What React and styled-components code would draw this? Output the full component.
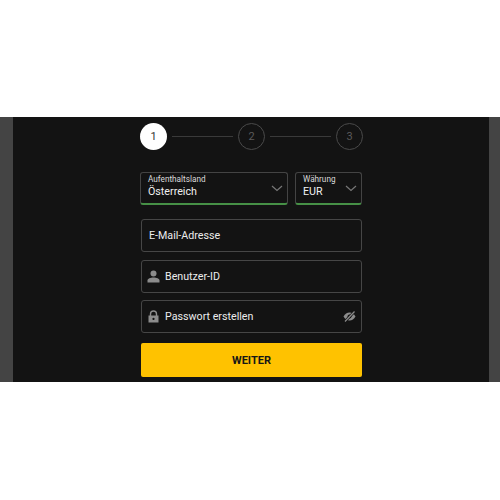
import React from "react";
import styled, { createGlobalStyle } from "styled-components";

const Global = createGlobalStyle`
  html, body { margin: 0; padding: 0; background: #fff; }
  body { font-family: Roboto, "Liberation Sans", sans-serif; }
`;

const Page = styled.div`
  width: 500px;
  height: 500px;
  padding-top: 117px;
  box-sizing: border-box;
  background: #fff;
`;

const Band = styled.div`
  height: 265px;
  display: grid;
  grid-template-columns: 13px 1fr 11px;
  background: #131313;
`;

const Side = styled.div`
  background: #444444;
`;

const Form = styled.div`
  width: 223px;
  margin-left: 127px;
  padding-top: 6px;
  display: flex;
  flex-direction: column;
`;

const Stepper = styled.div`
  display: flex;
  align-items: center;
  margin-bottom: 22px;
`;

const Step = styled.div`
  width: 27px;
  height: 27px;
  box-sizing: border-box;
  border-radius: 50%;
  flex: none;
  display: flex;
  align-items: center;
  justify-content: center;
  font-size: 11px;
  background: ${(p) => (p.$active ? "#ffffff" : "transparent")};
  color: ${(p) => (p.$active ? "#333333" : "#5a5a5a")};
  border: ${(p) => (p.$active ? "none" : "1px solid #4a4a4a")};
`;

const Line = styled.div`
  flex: 1;
  height: 1px;
  margin: 0 5px;
  background: #3a3a3a;
`;

const SelectRow = styled.div`
  display: grid;
  grid-template-columns: 148px 67px;
  column-gap: 7px;
  margin-bottom: 14px;
`;

const Select = styled.div`
  height: 33px;
  box-sizing: border-box;
  border: 1px solid #444444;
  border-bottom: 2px solid #469046;
  border-radius: 3px;
  padding: 1px 7px 0;
  position: relative;
`;

const SelectLabel = styled.div`
  font-size: 8.2px;
  line-height: 11px;
  color: #dcdcdc;
`;

const SelectValue = styled.div`
  font-size: 10.7px;
  line-height: 14px;
  color: #f0f0f0;
`;

const Chevron = styled.svg`
  position: absolute;
  right: 4px;
  top: 12px;
`;

const Field = styled.div`
  width: 221px;
  height: 33px;
  box-sizing: border-box;
  margin-left: 1px;
  margin-bottom: 7.5px;
  border: 1px solid #464646;
  border-radius: 3px;
  display: flex;
  align-items: center;
  padding: 0 5px 0 ${(p) => (p.$icon ? "5px" : "7px")};
  font-size: 10.7px;
  color: #ececec;
`;

const IconSlot = styled.svg`
  flex: none;
  margin-right: 5px;
`;

const FieldText = styled.span`
  flex: 1;
`;

const Button = styled.button`
  width: 221px;
  height: 34px;
  margin: 2.5px 0 0 1px;
  border: none;
  border-radius: 2px;
  background: #ffc200;
  color: #161616;
  font-family: Roboto, "Liberation Sans", sans-serif;
  font-size: 11px;
  font-weight: 700;
  padding: 0;
`;

const ChevronIcon = () => (
  <Chevron width="12" height="7" viewBox="0 0 12 7" fill="none">
    <path d="M1 1 L6 5.5 L11 1" stroke="#777777" strokeWidth="1.2" />
  </Chevron>
);

export default function App() {
  return (
    <Page>
      <Global />
      <Band>
        <Side />
        <Form>
          <Stepper>
            <Step $active>1</Step>
            <Line />
            <Step>2</Step>
            <Line />
            <Step>3</Step>
          </Stepper>
          <SelectRow>
            <Select>
              <SelectLabel>Aufenthaltsland</SelectLabel>
              <SelectValue>Österreich</SelectValue>
              <ChevronIcon />
            </Select>
            <Select>
              <SelectLabel>Währung</SelectLabel>
              <SelectValue>EUR</SelectValue>
              <ChevronIcon />
            </Select>
          </SelectRow>
          <Field>
            <FieldText>E-Mail-Adresse</FieldText>
          </Field>
          <Field $icon>
            <IconSlot width="13" height="13" viewBox="0 0 13 13">
              <circle cx="6.5" cy="3.5" r="3" fill="#8c8c8c" />
              <path d="M0.5 12.5 V10.5 C0.5 8.5 3.5 7.5 6.5 7.5 C9.5 7.5 12.5 8.5 12.5 10.5 V12.5 Z" fill="#8c8c8c" />
            </IconSlot>
            <FieldText>Benutzer-ID</FieldText>
          </Field>
          <Field $icon>
            <IconSlot width="13" height="13" viewBox="0 0 13 13">
              <path d="M3.5 6 V4 a3 3 0 0 1 6 0 V6" fill="none" stroke="#8c8c8c" strokeWidth="1.4" />
              <path d="M1.5 5.5 H11.5 V12.5 H1.5 Z M6.5 7.8 a1.1 1.1 0 1 0 .01 0 Z" fill="#8c8c8c" fillRule="evenodd" />
            </IconSlot>
            <FieldText>Passwort erstellen</FieldText>
            <svg width="13" height="11" viewBox="0 0 13 11">
              <path d="M0.5 5.5 C2 2.7 4 1.5 6.5 1.5 C9 1.5 11 2.7 12.5 5.5 C11 8.3 9 9.5 6.5 9.5 C4 9.5 2 8.3 0.5 5.5 Z" fill="#8c8c8c" />
              <circle cx="6.5" cy="5.5" r="2" fill="#131313" />
              <path d="M2 10.5 L11.5 0.5" stroke="#131313" strokeWidth="2.6" />
              <path d="M2 10.5 L11.5 0.5" stroke="#8c8c8c" strokeWidth="1.2" />
            </svg>
          </Field>
          <Button>WEITER</Button>
        </Form>
        <Side />
      </Band>
    </Page>
  );
}
